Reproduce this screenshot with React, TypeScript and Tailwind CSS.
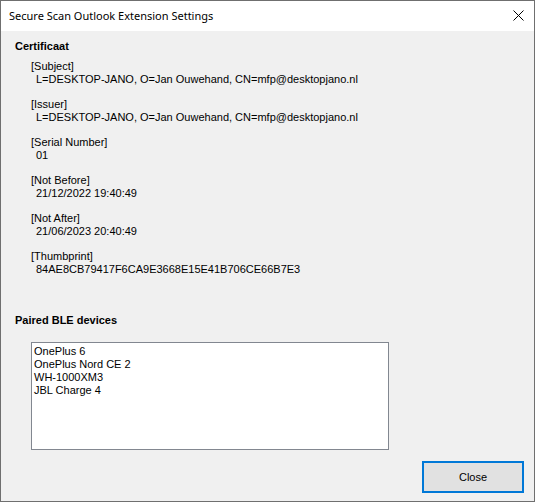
import React from 'react';

const fields = [
  { label: '[Subject]', value: 'L=DESKTOP-JANO, O=Jan Ouwehand, CN=mfp@desktopjano.nl' },
  { label: '[Issuer]', value: 'L=DESKTOP-JANO, O=Jan Ouwehand, CN=mfp@desktopjano.nl' },
  { label: '[Serial Number]', value: '01' },
  { label: '[Not Before]', value: '21/12/2022 19:40:49' },
  { label: '[Not After]', value: '21/06/2023 20:40:49' },
  { label: '[Thumbprint]', value: '84AE8CB79417F6CA9E3668E15E41B706CE66B7E3' },
];

const devices = ['OnePlus 6', 'OnePlus Nord CE 2', 'WH-1000XM3', 'JBL Charge 4'];

export default function App() {
  return (
    <div className="w-[535px] h-[502px] border border-[#6f6f6f] flex flex-col font-['Liberation_Sans',Arial,sans-serif] text-black">
      {/* title bar */}
      <div className="h-[30px] bg-white flex items-center justify-between pl-[8px] pr-[10px]">
        <span className="text-[11px] font-['Noto_Sans',sans-serif] leading-none pb-[1px]">
          Secure Scan Outlook Extension Settings
        </span>
        <svg width="11" height="11" viewBox="0 0 11 11" className="mb-[1px]">
          <path d="M0.5 0.5L10.5 10.5M10.5 0.5L0.5 10.5" stroke="#000" strokeWidth="1" />
        </svg>
      </div>

      <div className="flex-1 bg-[#f0f0f0] flex flex-col text-[11px] leading-[13px]">
        <div className="pt-[9px] pl-[14px] font-bold">Certificaat</div>

        <div className="mt-[7px] pl-[30px] flex flex-col gap-[12px]">
          {fields.map((f) => (
            <div key={f.label}>
              <div>{f.label}</div>
              <div className="pl-[5px]">{f.value}</div>
            </div>
          ))}
        </div>

        <div className="mt-[38px] pl-[14px] font-bold">Paired BLE devices</div>

        <div className="mt-[15px] ml-[30px] w-[358px] h-[108px] bg-white border border-[#828790] pl-[2px] pt-[2px]">
          {devices.map((d) => (
            <div key={d}>{d}</div>
          ))}
        </div>

        <div className="flex justify-end pr-[10px] mt-[11px]">
          <button className="w-[102px] h-[32px] bg-[#e1e1e1] border-2 border-[#0078d7] text-[11px]">
            Close
          </button>
        </div>
      </div>
    </div>
  );
}
